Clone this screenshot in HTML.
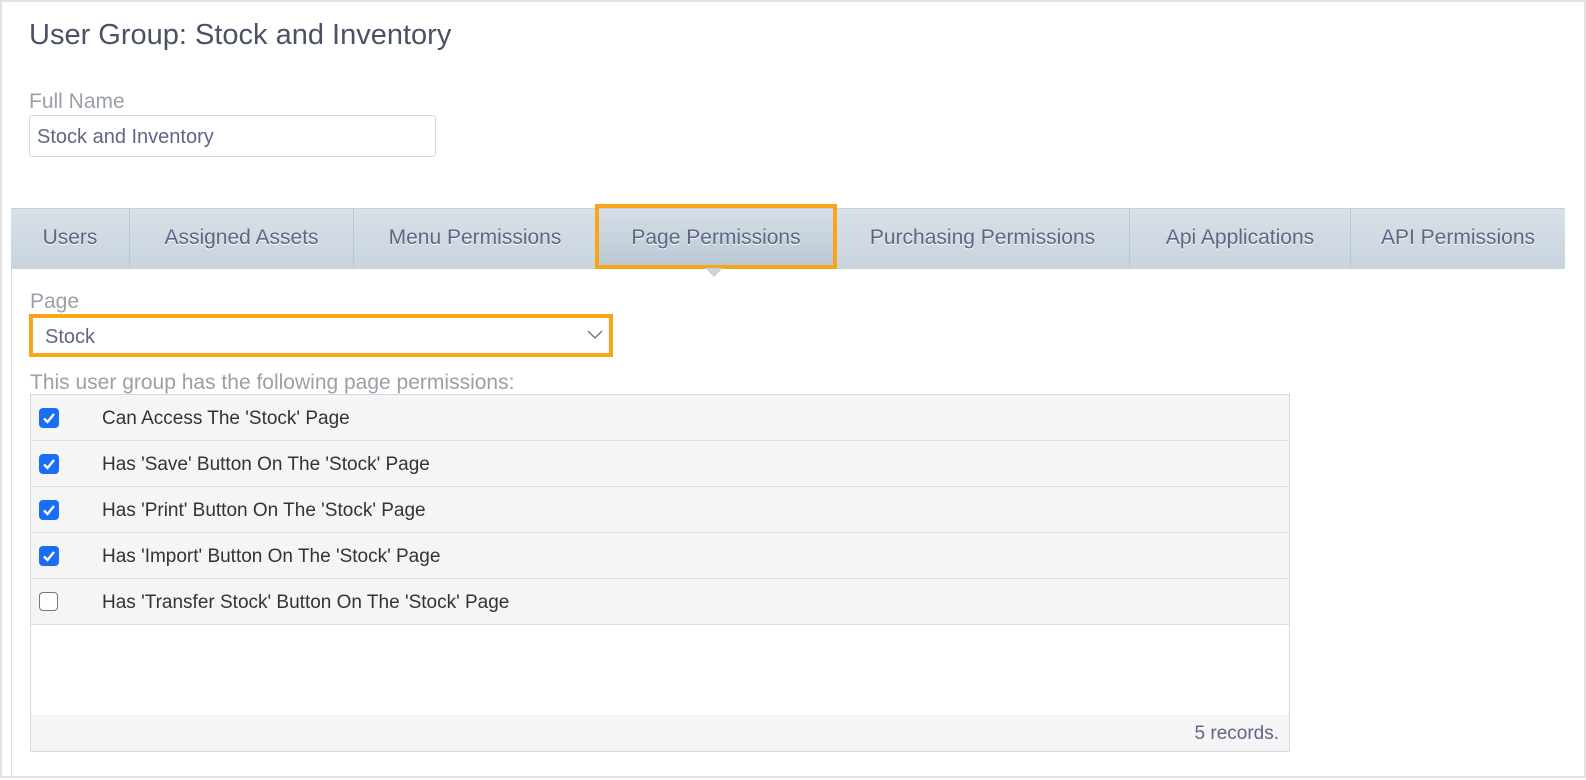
<!DOCTYPE html>
<html><head><style>
body{margin:0;width:1586px;height:780px;background:#fff;font-family:"Liberation Sans",sans-serif;position:relative;overflow:hidden}
.abs{position:absolute}
.frame{left:0;top:0;width:1582px;height:774px;border:2px solid #e2e2e2;border-top-width:2px}
.tabs{left:11px;top:208px;width:1554px;height:58px;background:linear-gradient(#d8e0e8,#c9d4de);border-top:1px solid #c4ced8;border-bottom:2px solid #c9d3dc}
.tab{position:absolute;top:0;height:58px;line-height:58px;text-align:center;font-size:21px;color:#5d6785;text-shadow:0 1px 0 #fff;border-right:1px solid #b8c7d5}
.row{position:absolute;left:0;width:1258px;height:45px;background:#f5f5f5;border-bottom:1px solid #dcdcdc;font-size:19px;color:#333}
.row span{position:absolute;left:71px;top:13px}
.cb{position:absolute;left:8px;top:13px;width:20px;height:20px;border-radius:4px;background:#1a6ef5}
.cb.off{background:#fff;border:1.5px solid #777;width:17px;height:17px;left:8px}
</style></head><body>
<div class="abs frame"></div>
<div class="abs" style="left:11px;top:266px;width:1px;height:510px;background:#ddd"></div>
<div class="abs" style="left:29px;top:19px;font-size:29px;color:#4a5266">User Group: Stock and Inventory</div>
<div class="abs" style="left:29px;top:90px;font-size:21px;color:#9aa0a8">Full Name</div>
<div class="abs" style="left:29px;top:115px;width:405px;height:40px;border:1px solid #d5d8dc;border-radius:3px;"><span style="position:absolute;left:7px;top:10px;font-size:20px;color:#5d6785">Stock and Inventory</span></div>
<div class="abs tabs">
<div class="tab" style="left:0;width:118px">Users</div>
<div class="tab" style="left:119px;width:223px">Assigned Assets</div>
<div class="tab" style="left:343px;width:242px">Menu Permissions</div>
<div class="tab" style="left:586px;width:238px;background:linear-gradient(#d6dee6,#b9c8d4)">Page Permissions</div>
<div class="tab" style="left:825px;width:293px">Purchasing Permissions</div>
<div class="tab" style="left:1119px;width:220px">Api Applications</div>
<div class="tab" style="left:1340px;width:214px;border-right:none">API Permissions</div>
</div>
<div class="abs" style="left:595px;top:204px;width:234px;height:57px;border:4px solid #f9a51a"></div>
<div class="abs" style="left:705px;top:268px;width:0;height:0;border-left:9px solid transparent;border-right:9px solid transparent;border-top:9px solid #c9d3dc"></div>
<div class="abs" style="left:30px;top:290px;font-size:21px;color:#9aa0a8">Page</div>
<div class="abs" style="left:29px;top:314px;width:576px;height:35px;border:4px solid #f9a51a"><span style="position:absolute;left:12px;top:8px;font-size:20px;color:#5d6785">Stock</span>
<svg style="position:absolute;right:6px;top:12px" width="16" height="10"><path d="M1 1 L8 8 L15 1" fill="none" stroke="#777" stroke-width="1.4"/></svg></div>
<div class="abs" style="left:30px;top:371px;font-size:21px;color:#9aa0a8">This user group has the following page permissions:</div>
<div class="abs" style="left:30px;top:394px;width:1258px;height:356px;border:1px solid #d5d8dc;background:#fff">
<div class="row" style="top:0"><div class="cb"><svg width="20" height="20"><path d="M5 10.5 L8.5 14 L15 6" fill="none" stroke="#fff" stroke-width="2.4"/></svg></div><span>Can Access The 'Stock' Page</span></div>
<div class="row" style="top:46px"><div class="cb"><svg width="20" height="20"><path d="M5 10.5 L8.5 14 L15 6" fill="none" stroke="#fff" stroke-width="2.4"/></svg></div><span>Has 'Save' Button On The 'Stock' Page</span></div>
<div class="row" style="top:92px"><div class="cb"><svg width="20" height="20"><path d="M5 10.5 L8.5 14 L15 6" fill="none" stroke="#fff" stroke-width="2.4"/></svg></div><span>Has 'Print' Button On The 'Stock' Page</span></div>
<div class="row" style="top:138px"><div class="cb"><svg width="20" height="20"><path d="M5 10.5 L8.5 14 L15 6" fill="none" stroke="#fff" stroke-width="2.4"/></svg></div><span>Has 'Import' Button On The 'Stock' Page</span></div>
<div class="row" style="top:184px"><div class="cb off"></div><span>Has 'Transfer Stock' Button On The 'Stock' Page</span></div>
<div style="position:absolute;left:0;top:320px;width:1258px;height:36px;background:#f5f5f5;font-size:19px;color:#5d6785;"><span style="position:absolute;right:10px;top:8px">5 records.</span></div>
</div>
</body></html>
